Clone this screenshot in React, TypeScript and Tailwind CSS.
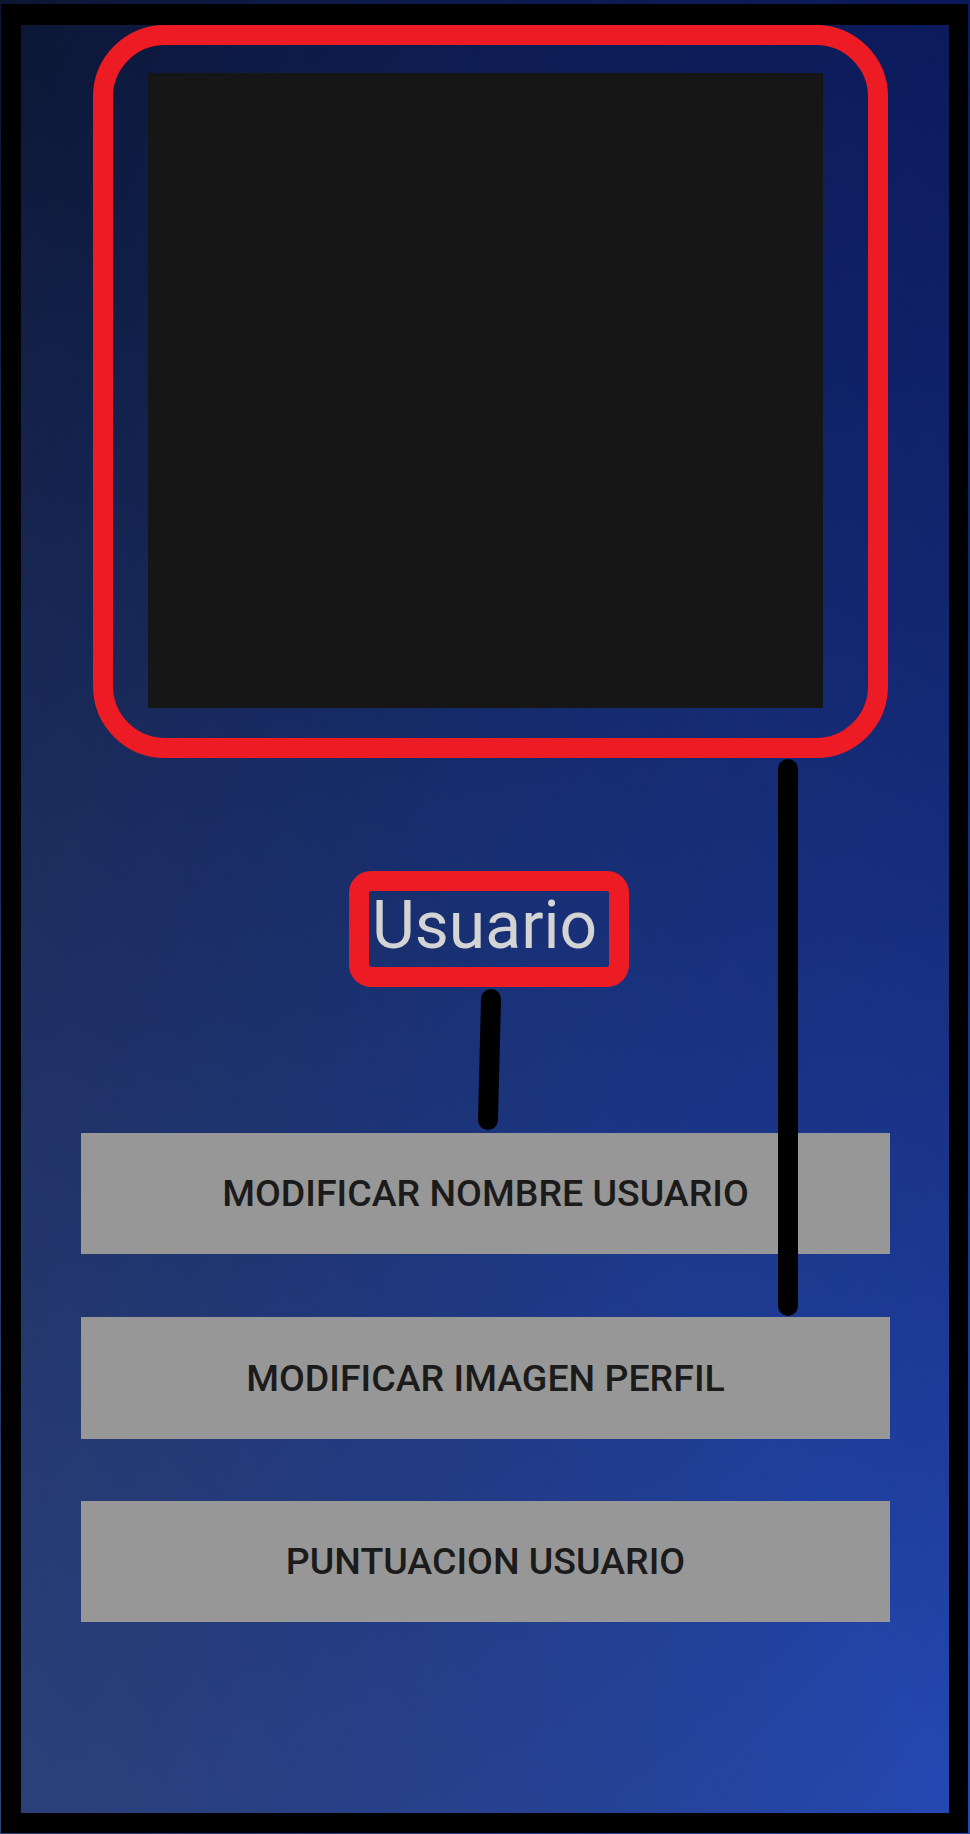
export default function App() {
  const botones = ["MODIFICAR NOMBRE USUARIO", "MODIFICAR IMAGEN PERFIL", "PUNTUACION USUARIO"];

  return (
    <div className="relative w-[970px] h-[1834px] overflow-hidden pt-[4px] pl-px pr-[2px] pb-px font-['Roboto',sans-serif] bg-[image:linear-gradient(to_top_right,rgba(64,81,127,0.5)_0%,rgba(64,81,127,0)_50%,rgba(0,7,70,0)_50%,rgba(0,7,70,0.55)_100%),linear-gradient(to_bottom_right,#0c1633,#2449b4)]">
      {/* marco negro */}
      <div className="h-full flex flex-col border-black border-l-[20px] border-t-[21px] border-r-[19px] border-b-[20px]">
        {/* imagen de perfil */}
        <div className="ml-[72px] w-[795px] h-[733px] shrink-0 rounded-[72px] border-[20px] border-[#ed1c24] pl-[35px] pt-[28px]">
          <div className="w-[675px] h-[635px] bg-[#171616]" />
        </div>

        {/* nombre */}
        <div className="mt-[113px] ml-[328px] w-[280px] h-[116px] shrink-0 rounded-[22px] border-[20px] border-[#ed1c24] pl-[3px] pt-[2px]">
          <span className="block text-[66px] leading-none text-[#d4d4d4]">Usuario</span>
        </div>

        {/* botones */}
        <div className="mt-[146px] ml-[60px] flex flex-col">
          {botones.map((b, i) => (
            <button
              key={b}
              className={
                "w-[809px] flex items-center justify-center bg-[#979797] text-[37.5px] font-medium text-[#1b1b1b] " +
                (i === 0 ? "h-[121px]" : i === 1 ? "mt-[63px] h-[122px]" : "mt-[62px] h-[121px]")
              }
            >
              {b}
            </button>
          ))}
        </div>
      </div>

      {/* trazos negros */}
      <svg className="absolute inset-0 pointer-events-none" width="970" height="1834" viewBox="0 0 970 1834">
        <line x1="491" y1="999" x2="488" y2="1120" stroke="#000" strokeWidth="20" strokeLinecap="round" />
        <line x1="788" y1="769" x2="788" y2="1306" stroke="#000" strokeWidth="20" strokeLinecap="round" />
      </svg>
    </div>
  );
}
